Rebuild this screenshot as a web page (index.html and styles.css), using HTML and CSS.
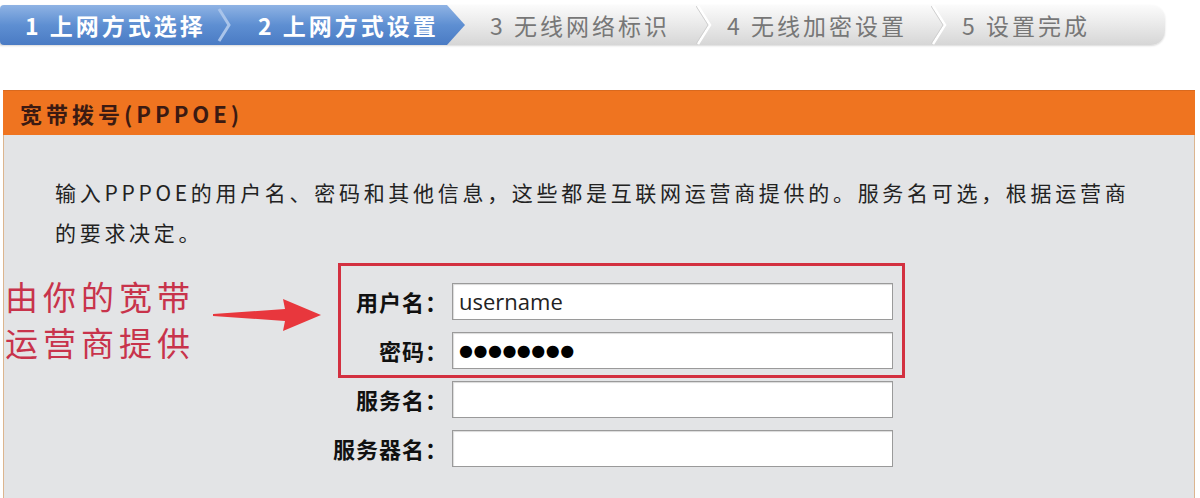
FILE: index.html
```html
<!DOCTYPE html>
<html lang="zh-CN">
<head>
	<meta charset="UTF-8">
	<title>上网方式设置</title>
	<link rel="stylesheet" href="styles.css">
</head>
<body>
	<div class="steps">
		<div class="steps-done">
			<div class="step step-1">1 上网方式选择</div>
			<svg class="chev" width="20" height="40" viewBox="0 0 20 40"><path d="M4 4 L14 20 L4 36" fill="none" stroke="#a9c4ea" stroke-width="3"/></svg>
			<div class="step step-2">2 上网方式设置</div>
		</div>
		<div class="step step-3">3 无线网络标识</div>
		<svg class="chev" width="16" height="40" viewBox="0 0 16 40"><path d="M2 1 L14 20 L2 39" fill="none" stroke="#ffffff" stroke-width="2.5"/><path d="M0 1 L12 20 L0 39" fill="none" stroke="#cfcfcf" stroke-width="1"/></svg>
		<div class="step step-4">4 无线加密设置</div>
		<svg class="chev" width="16" height="40" viewBox="0 0 16 40"><path d="M2 1 L14 20 L2 39" fill="none" stroke="#ffffff" stroke-width="2.5"/><path d="M0 1 L12 20 L0 39" fill="none" stroke="#cfcfcf" stroke-width="1"/></svg>
		<div class="step step-5">5 设置完成</div>
	</div>

	<div class="panel">
		<div class="panel-head">宽带拨号(PPPOE)</div>
		<div class="panel-body">
			<p class="intro">输入PPPOE的用户名、密码和其他信息，这些都是互联网运营商提供的。服务名可选，根据运营商的要求决定。</p>

			<div class="form">
				<label class="label">用户名：</label>
				<div class="field">username</div>
				<label class="label">密码：</label>
				<div class="field dots">●●●●●●●●</div>
				<label class="label">服务名：</label>
				<div class="field"></div>
				<label class="label">服务器名：</label>
				<div class="field"></div>
			</div>

			<div class="note">
				<div>由你的宽带</div>
				<div>运营商提供</div>
			</div>
			<svg class="note-arrow" width="110" height="40" viewBox="0 0 110 40"><polygon points="0,19 72,14 70,4 108,20 70,36 72,26 0,21" fill="#e8373d"/></svg>
			<div class="highlight"></div>
		</div>
	</div>
</body>
</html>
```

FILE: styles.css
```css
body {
	background: #fff;
	margin: 0;
	padding: 0;
	font-family: "Noto Sans CJK SC", "Noto Sans", sans-serif;
}

/* step bar */
.steps {
	margin-top: 5px;
	width: 1165px;
	height: 40px;
	display: flex;
	align-items: center;
	background: linear-gradient(#fbfbfb, #e9e9e9 50%, #d6d6d6);
	border-radius: 0 14px 14px 0;
	box-shadow: 0 1px 2px rgba(0, 0, 0, 0.15);
}

.steps-done {
	display: flex;
	align-items: center;
	width: 465px;
	height: 40px;
	background: linear-gradient(#8fb3e4, #5e8fd2 50%, #4a7bc4);
	border-radius: 4px 0 0 4px;
	clip-path: polygon(0 0, 447px 0, 465px 50%, 447px 100%, 0 100%);
}

.step {
	font-size: 23px;
	font-weight: bold;
	letter-spacing: 3px;
	line-height: 40px;
	white-space: nowrap;
	color: #777;
}

.steps-done .step {
	color: #fff;
}

.step-1 {
	width: 190px;
	padding-left: 25px;
}

.step-2 {
	width: 207px;
	padding-left: 23px;
}

.step-3 {
	width: 206px;
	padding-left: 25px;
	font-weight: normal;
}

.step-4 {
	width: 204px;
	padding-left: 15px;
	font-weight: normal;
}

.step-5 {
	padding-left: 15px;
	font-weight: normal;
}

.chev {
	flex: none;
}

/* panel */
.panel {
	margin: 45px 5px 0 3px;
}

.panel-head {
	height: 45px;
	line-height: 45px;
	padding-left: 17px;
	background: #ef7420;
	border-top: 1px solid #d9691e;
	color: #3b1a12;
	font-size: 22px;
	font-weight: bold;
	letter-spacing: 4px;
	box-sizing: border-box;
}

.panel-body {
	position: relative;
	height: 363px;
	background: #e3e4e6;
	border-left: 1px solid #dcb58f;
	border-right: 1px solid #dcb58f;
	padding-top: 37px;
	box-sizing: border-box;
}

.intro {
	margin: 0 0 0 51px;
	width: 1090px;
	font-size: 21px;
	letter-spacing: 3.7px;
	line-height: 40px;
	color: #222;
}

.form {
	display: grid;
	grid-template-columns: 444px 441px;
	grid-auto-rows: 37px;
	column-gap: 4px;
	row-gap: 12px;
	margin-top: 31px;
}

.label {
	text-align: right;
	font-size: 22px;
	font-weight: bold;
	letter-spacing: 1px;
	line-height: 37px;
	color: #111;
}

.field {
	background: #fff;
	border: 1px solid #9a9a9a;
	box-shadow: inset 1px 1px 1px rgba(0, 0, 0, 0.15);
	padding-left: 6px;
	font-family: "Open Sans", sans-serif;
	font-size: 22px;
	line-height: 35px;
	color: #222;
}

.dots {
	font-family: "DejaVu Sans", sans-serif;
	font-size: 16px;
	letter-spacing: 0.5px;
	color: #000;
}

/* annotations drawn over the screenshot */
.note {
	position: absolute;
	left: 1px;
	top: 138px;
	font-size: 33px;
	letter-spacing: 5px;
	line-height: 46px;
	color: #c8334b;
}

.note-arrow {
	position: absolute;
	left: 209px;
	top: 160px;
}

.highlight {
	position: absolute;
	left: 334px;
	top: 128px;
	width: 567px;
	height: 115px;
	border: 3px solid #d33040;
	box-sizing: border-box;
}
```
